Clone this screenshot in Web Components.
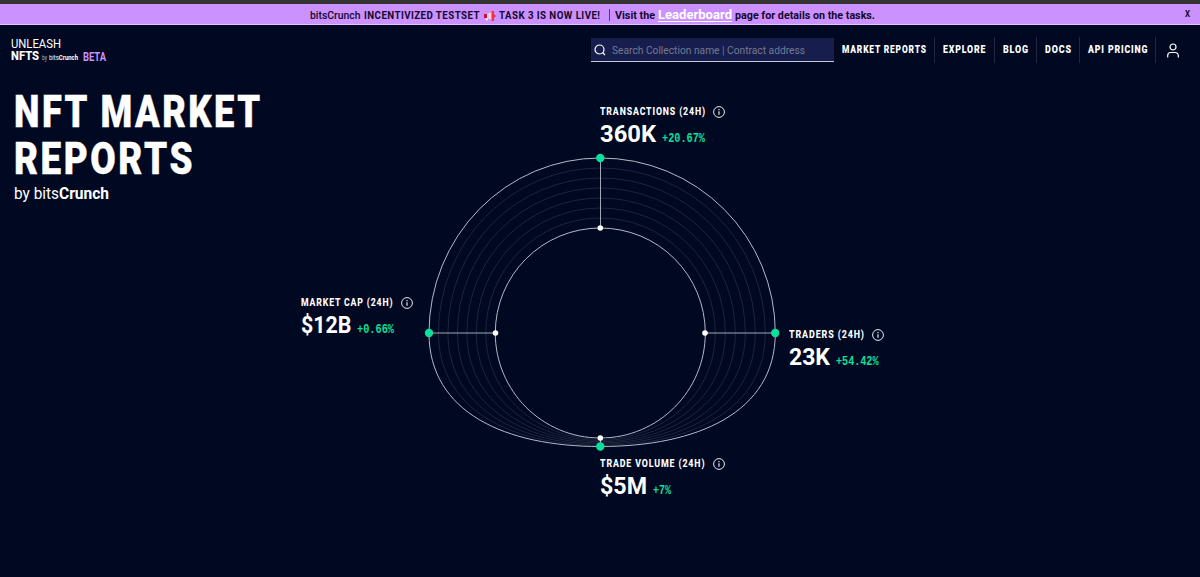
<!DOCTYPE html>
<html lang="en">
<head>
<meta charset="utf-8">
<title>NFT Market Reports</title>
<style>
  body {
    margin: 0;
    background: #000822;
    font-family: Roboto, "Liberation Sans", sans-serif;
    color: #fff;
  }
</style>
</head>
<body>
<market-page></market-page>

<script>
// Squeezes a line of text to a given width, for the condensed look
class FitText extends HTMLElement {
  constructor() {
    super();
    this.attachShadow({ mode: 'open' });
    this.shadowRoot.innerHTML = `
      <style>
        :host { display: block; flex: none; white-space: nowrap; }
        span { display: inline-block; transform-origin: 0 50%; }
      </style>
      <span><slot></slot></span>
    `;
  }

  connectedCallback() {
    const width = Number(this.getAttribute('width'));
    const span = this.shadowRoot.querySelector('span');
    const spacing = parseFloat(getComputedStyle(this).letterSpacing) || 0;
    const natural = span.getBoundingClientRect().width - spacing;

    this.style.width = `${width}px`;
    span.style.transform = `scaleX(${width / natural})`;
  }
}

class PromoBanner extends HTMLElement {
  constructor() {
    super();
    this.attachShadow({ mode: 'open' });
    this.shadowRoot.innerHTML = `
      <style>
        :host {
          display: grid;
          grid-template-columns: 310px 1fr 15px;
          align-items: center;
          box-sizing: border-box;
          height: 25px;
          border-top: 4px solid #333;
          border-bottom: 1px solid #e3c4ff;
          background: #ca91ff;
          color: #14082e;
          font-size: 11px;
          font-weight: 700;
          line-height: 20px;
        }
        .message { grid-column: 2; display: flex; align-items: center; height: 20px; padding-top: 2px; }
        .name { font-weight: 500; margin-right: 3px; }
        .caps { letter-spacing: .5px; }
        svg { width: 13px; height: 10px; margin: -1px 3.5px 0; }
        i { width: 1px; height: 12px; margin: -2px 5px 0 9px; background: #54377c; }
        .link {
          margin: -2px 3px 0;
          color: #fff;
          font-size: 13px;
          line-height: 20px;
        }
        u { text-underline-offset: 2px; }
        .close { font-size: 9px; line-height: 16px; padding-bottom: 2px; }
      </style>
      <div class="message">
        <fit-text class="name" width="50.500">bitsCrunch</fit-text>
        <fit-text class="caps" width="115.500">INCENTIVIZED TESTSET</fit-text>
        <svg viewBox="0 0 13 10">
          <path d="M1 3h3v4H1z" fill="#c8103c"/>
          <path d="M4 3l5-2v8L4 7z" fill="#f5cdd6"/>
          <path d="M8.500 0H11v10H8.500z" fill="#ee3347"/>
          <path d="M11 3.500l1.500.5v2l-1.500.5z" fill="#ee3347"/>
          <path d="M2.500 7h2.500v2.500H3z" fill="#f7dbe9"/>
        </svg>
        <fit-text class="caps" width="101">TASK 3 IS NOW LIVE!</fit-text>
        <i></i>
        <fit-text width="40">Visit the</fit-text>
        <fit-text class="link" width="74"><u>Leaderboard</u></fit-text>
        <fit-text width="140">page for details on the tasks.</fit-text>
      </div>
      <fit-text class="close" width="5">X</fit-text>
    `;
  }
}

class SiteLogo extends HTMLElement {
  constructor() {
    super();
    this.attachShadow({ mode: 'open' });
    this.shadowRoot.innerHTML = `
      <style>
        :host { display: flex; align-items: flex-end; height: 26px; line-height: 12px; }
        .top { font-size: 13px; font-weight: 400; }
        .row { display: flex; align-items: baseline; }
        .nfts { font-size: 13px; font-weight: 800; margin-right: 3px; }
        .small { font-size: 6.5px; }
        .by { margin-right: 2px; color: #b8bccd; }
        .beta { margin: 0 0 1.5px 5px; color: #ca91ff; font-size: 12px; font-weight: 700; }
      </style>
      <div>
        <fit-text class="top" width="50">UNLEASH</fit-text>
        <div class="row">
          <fit-text class="nfts" width="28">NFTS</fit-text>
          <fit-text class="small by" width="5">by</fit-text>
          <fit-text class="small" width="29">bits<b>Crunch</b></fit-text>
        </div>
      </div>
      <fit-text class="beta" width="23">BETA</fit-text>
    `;
  }
}

class SearchBox extends HTMLElement {
  constructor() {
    super();
    this.attachShadow({ mode: 'open' });
    this.shadowRoot.innerHTML = `
      <style>
        :host {
          display: flex;
          align-items: center;
          gap: 6px;
          box-sizing: border-box;
          width: 243px;
          height: 24px;
          padding-left: 3px;
          border-bottom: 1px solid #c3c8dc;
          background: #171e4d;
          color: #747992;
          font-size: 11.5px;
        }
        svg { width: 12px; height: 12px; fill: none; stroke: #fff; stroke-width: 1.2; }
      </style>
      <svg viewBox="0 0 12 12"><circle cx="5.500" cy="5.500" r="4.500"/><path d="M8.500 8.500l2.500 2.500"/></svg>
      <fit-text width="193">Search Collection name | Contract address</fit-text>
    `;
  }
}

class NavItem extends HTMLElement {
  constructor() {
    super();
    this.attachShadow({ mode: 'open' });
    this.shadowRoot.innerHTML = `
      <style>
        :host {
          display: flex;
          align-items: center;
          height: 26px;
          padding: 0 8px;
          border-right: 1px solid #20273f;
          font-size: 10.2px;
          font-weight: 900;
          letter-spacing: 1px;
        }
        fit-text { margin-top: -1px; }
      </style>
      <fit-text width="${this.getAttribute('width')}"><slot></slot></fit-text>
    `;
  }
}

class SiteHeader extends HTMLElement {
  constructor() {
    super();
    this.attachShadow({ mode: 'open' });
    this.shadowRoot.innerHTML = `
      <style>
        :host {
          display: flex;
          align-items: center;
          height: 50px;
          padding: 0 21px 0 11px;
        }
        site-logo { margin-top: 2px; }
        search-box { margin-left: auto; }
        .user { width: 12px; height: 15px; margin-left: 11px; fill: none; stroke: #fff; stroke-width: 1.2; }
      </style>
      <site-logo></site-logo>
      <search-box></search-box>
      <nav-item width="84">MARKET REPORTS</nav-item>
      <nav-item width="42.500">EXPLORE</nav-item>
      <nav-item width="25">BLOG</nav-item>
      <nav-item width="26">DOCS</nav-item>
      <nav-item width="59.500">API PRICING</nav-item>
      <svg class="user" viewBox="0 0 12 15">
        <circle cx="6" cy="4" r="3"/>
        <path d="M.7 14.500V12.500a3 3 0 0 1 3-3h4.600a3 3 0 0 1 3 3v2"/>
      </svg>
    `;
  }
}

class PageTitle extends HTMLElement {
  constructor() {
    super();
    this.attachShadow({ mode: 'open' });
    this.shadowRoot.innerHTML = `
      <style>
        :host { display: block; padding: 14px 0 0 14px; }
        h1 { margin: 0; font-size: 43.5px; font-weight: 900; line-height: 47px; letter-spacing: 3px; -webkit-text-stroke: .4px #fff; }
        .by { display: flex; font-size: 16px; line-height: 20px; padding-top: 1px; }
        b { font-weight: 700; }
      </style>
      <h1>
        <fit-text width="246">NFT MARKET</fit-text>
        <fit-text width="178.500">REPORTS</fit-text>
      </h1>
      <div class="by">
        <fit-text width="45">by bits</fit-text>
        <fit-text width="50"><b>Crunch</b></fit-text>
      </div>
    `;
  }
}

class StatCard extends HTMLElement {
  constructor() {
    super();
    const attr = name => this.getAttribute(name);
    const [labelWidth, valueWidth, deltaWidth] = attr('widths').split(' ');

    this.attachShadow({ mode: 'open' });
    this.shadowRoot.innerHTML = `
      <style>
        :host { display: block; position: absolute; }
        .label, .value { display: flex; }
        .label { align-items: center; gap: 8px; height: 14px; font-size: 10.2px; font-weight: 800; letter-spacing: 1px; }
        .label fit-text { margin-top: -1px; }
        .value { align-items: baseline; gap: 5.5px; font-size: 24.5px; font-weight: 700; line-height: 30px; }
        .delta {
          color: #0be09b;
          font-family: "Liberation Mono", monospace;
          font-size: 12.5px;
        }
        svg { width: 12px; height: 12px; margin-top: .5px; fill: none; stroke: #e6e8f0; }
      </style>
      <div class="label">
        <fit-text width="${labelWidth}">${attr('label')}</fit-text>
        <svg viewBox="0 0 12 12"><circle cx="6" cy="6" r="5.400"/><path d="M6 5.200v3.600M6 3v1.200" stroke-width="1.200"/></svg>
      </div>
      <div class="value">
        <fit-text width="${valueWidth}">${attr('value')}</fit-text>
        <fit-text class="delta" width="${deltaWidth}">${attr('delta')}</fit-text>
      </div>
    `;
  }
}

class RadarChart extends HTMLElement {
  constructor() {
    super();
    this.attachShadow({ mode: 'open' });
    this.shadowRoot.innerHTML = `
      <style>
        :host { display: block; }
        svg { display: block; width: 360px; height: 300px; }
      </style>
      <svg viewBox="420 152 360 300">
        <g fill="none">${this._rings()}</g>
        <g stroke="#a3a7b7">
          <path d="M600.500 158V228M429 333H495.500M705 333H775M600.500 438V446.500"/>
        </g>
        <g fill="#fff">
          <circle cx="600.300" cy="228" r="2.800"/>
          <circle cx="705" cy="333" r="2.800"/>
          <circle cx="600.300" cy="438" r="2.800"/>
          <circle cx="495.500" cy="333" r="2.800"/>
        </g>
        <g fill="#0be09b">
          <circle cx="600.300" cy="158" r="4.200"/>
          <circle cx="775.200" cy="333" r="4.200"/>
          <circle cx="600.300" cy="446.500" r="4.200"/>
          <circle cx="429" cy="333" r="4.200"/>
        </g>
      </svg>
    `;
  }

  // Eight rings, from the inner circle out to the data shape
  _rings() {
    const cx = 600.3;
    const cy = 333;
    const inner = 105;
    const outer = { top: 175, right: 175, bottom: 113.5, left: 171.3 };
    const k = 0.5523;
    let rings = '';

    for (let i = 0; i <= 7; i++) {
      const radius = side => inner + (outer[side] - inner) * i / 7;
      const [t, r, b, l] = ['top', 'right', 'bottom', 'left'].map(radius);
      const edge = i === 0 || i === 7;
      // the lower handles are longer than an ellipse's, which fills out the corners
      const lower = k * (t + b) / 2;

      rings += `<path stroke="${edge ? '#b5b9c8' : '#1e253c'}" d="M${cx} ${cy - t}
        A${r} ${t} 0 0 1 ${cx + r} ${cy}
        C${cx + r} ${cy + lower} ${cx + r * k} ${cy + b} ${cx} ${cy + b}
        C${cx - l * k} ${cy + b} ${cx - l} ${cy + lower} ${cx - l} ${cy}
        A${l} ${t} 0 0 1 ${cx} ${cy - t}Z"/>`;
    }
    return rings;
  }
}

class MarketPage extends HTMLElement {
  constructor() {
    super();
    this.attachShadow({ mode: 'open' });
    this.shadowRoot.innerHTML = `
      <style>
        :host { display: block; position: relative; height: 577px; overflow: hidden; }
        radar-chart { position: absolute; left: 420px; top: 152px; }
        .transactions { left: 600px; top: 105px; }
        .cap { left: 301px; top: 296px; }
        .traders { left: 789px; top: 328px; }
        .volume { left: 600px; top: 457px; }
      </style>
      <promo-banner></promo-banner>
      <site-header></site-header>
      <page-title></page-title>
      <radar-chart></radar-chart>
      <stat-card class="transactions" label="TRANSACTIONS (24H)" value="360K" delta="+20.67%" widths="105 56 43"></stat-card>
      <stat-card class="cap" label="MARKET CAP (24H)" value="$12B" delta="+0.66%" widths="91.500 50.500 37"></stat-card>
      <stat-card class="traders" label="TRADERS (24H)" value="23K" delta="+54.42%" widths="75 41 42.500"></stat-card>
      <stat-card class="volume" label="TRADE VOLUME (24H)" value="$5M" delta="+7%" widths="104.500 47 18"></stat-card>
    `;
  }
}

customElements.define('fit-text', FitText);
customElements.define('promo-banner', PromoBanner);
customElements.define('site-logo', SiteLogo);
customElements.define('search-box', SearchBox);
customElements.define('nav-item', NavItem);
customElements.define('site-header', SiteHeader);
customElements.define('page-title', PageTitle);
customElements.define('stat-card', StatCard);
customElements.define('radar-chart', RadarChart);
customElements.define('market-page', MarketPage);
</script>
</body>
</html>
